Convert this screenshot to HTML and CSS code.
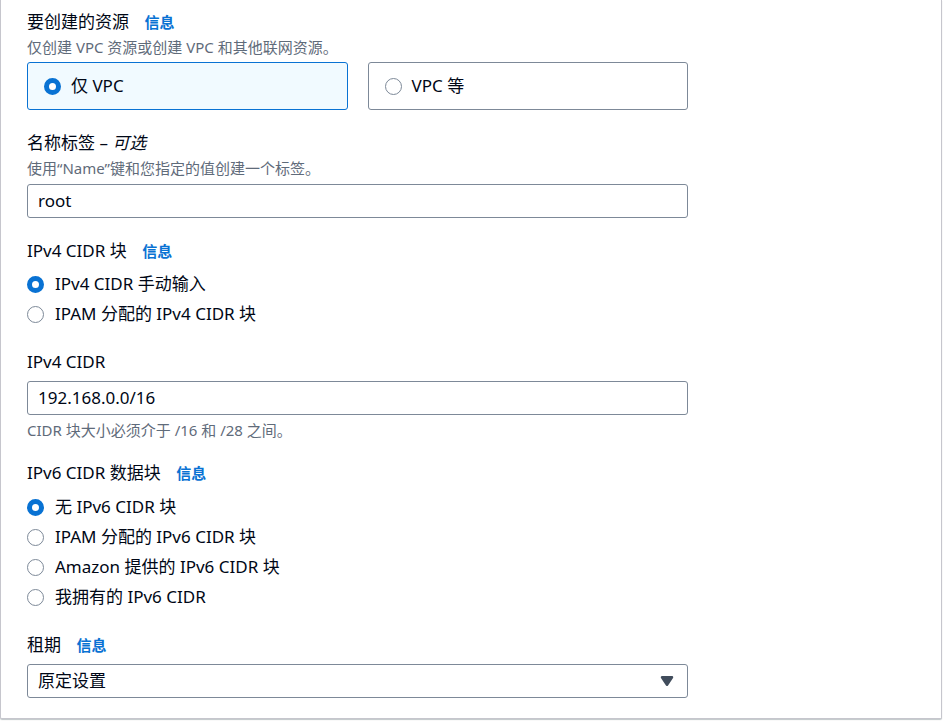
FILE: index.html
```html
<!DOCTYPE html>
<html lang="zh-CN">
<head>
<meta charset="utf-8">
<title>创建 VPC</title>
<link rel="stylesheet" href="styles.css">
</head>
<body>
<div class="panel">
  <div class="field">
    <div class="label">要创建的资源 <a class="info" href="#">信息</a></div>
    <div class="desc">仅创建 VPC 资源或创建 VPC 和其他联网资源。</div>
    <div class="tiles">
      <div class="tile selected"><span class="radio checked"></span><span>仅 VPC</span></div>
      <div class="tile"><span class="radio"></span><span>VPC 等</span></div>
    </div>
  </div>

  <div class="field">
    <div class="label">名称标签 – <i>可选</i></div>
    <div class="desc">使用“Name”键和您指定的值创建一个标签。</div>
    <div class="input">root</div>
  </div>

  <div class="field">
    <div class="label">IPv4 CIDR 块 <a class="info" href="#">信息</a></div>
    <div class="radios">
      <div class="option"><span class="radio checked"></span><span>IPv4 CIDR 手动输入</span></div>
      <div class="option"><span class="radio"></span><span>IPAM 分配的 IPv4 CIDR 块</span></div>
    </div>
  </div>

  <div class="field">
    <div class="label">IPv4 CIDR</div>
    <div class="input gap7">192.168.0.0/16</div>
    <div class="hint">CIDR 块大小必须介于 /16 和 /28 之间。</div>
  </div>

  <div class="field">
    <div class="label">IPv6 CIDR 数据块 <a class="info" href="#">信息</a></div>
    <div class="radios gap7">
      <div class="option"><span class="radio checked"></span><span>无 IPv6 CIDR 块</span></div>
      <div class="option"><span class="radio"></span><span>IPAM 分配的 IPv6 CIDR 块</span></div>
      <div class="option"><span class="radio"></span><span>Amazon 提供的 IPv6 CIDR 块</span></div>
      <div class="option"><span class="radio"></span><span>我拥有的 IPv6 CIDR</span></div>
    </div>
  </div>

  <div class="field">
    <div class="label">租期 <a class="info" href="#">信息</a></div>
    <div class="select gap7">
      <span>原定设置</span>
      <svg class="caret" width="20" height="20" viewBox="0 0 16 16"><path d="M4 5h8l-4 6z" fill="#414d5c" stroke="#414d5c" stroke-width="2" stroke-linejoin="round"/></svg>
    </div>
  </div>
</div>
</body>
</html>
```

FILE: styles.css
```css
* { box-sizing: border-box; }
html, body { margin: 0; padding: 0; background: #ffffff; }
body {
  font-family: "Noto Sans", "Noto Sans CJK SC", sans-serif;
  color: #000716;
  font-size: 17px;
  width: 944px;
  height: 721px;
  overflow: hidden;
}
.panel {
  width: 942px;
  border: 1px solid #c6c6cd;
  border-top: none;
  border-radius: 0 0 2px 2px;
  box-shadow: 0 1px 1px rgba(0, 28, 36, 0.25);
  padding: 10px 26px 20px 26px;
  background: #fff;
}
.field { width: 661px; }
.field + .field { margin-top: 21px; }
.label {
  font-size: 17px;
  line-height: 24px;
  height: 24px;
  white-space: nowrap;
}
.label i { font-style: italic; }
.info {
  color: #0972d3;
  font-weight: 700;
  font-size: 15px;
  text-decoration: none;
  margin-left: 11px;
}
.desc {
  margin-top: 3px;
  font-size: 15px;
  line-height: 20px;
  color: #5f6b7a;
}
.hint {
  margin-top: 5px;
  font-size: 15px;
  line-height: 20px;
  color: #5f6b7a;
}
.tiles {
  margin-top: 5px;
  display: grid;
  grid-template-columns: 1fr 1fr;
  gap: 20px;
}
.tile {
  height: 48px;
  border: 1px solid #7d8998;
  border-radius: 3px;
  display: flex;
  align-items: center;
  padding-left: 16px;
  gap: 10px;
  line-height: 24px;
}
.tile.selected {
  border-color: #0972d3;
  background: #f1faff;
}
.radio {
  width: 17px;
  height: 17px;
  border-radius: 50%;
  border: 1.5px solid #7d8998;
  background: #fff;
  flex: none;
}
.radio.checked {
  border: 5px solid #0972d3;
}
.radios { margin-top: 6px; }
.radios.gap7 { margin-top: 7px; }
.option {
  height: 30px;
  display: flex;
  align-items: center;
  gap: 11px;
  line-height: 24px;
}
.input, .select {
  margin-top: 6px;
  height: 34px;
  border: 1px solid #7d8998;
  border-radius: 3px;
  padding: 0 10px;
  display: flex;
  align-items: center;
  line-height: 24px;
}
.input.gap7, .select.gap7 { margin-top: 7px; }
.select { justify-content: space-between; }
.caret { display: block; }
```
